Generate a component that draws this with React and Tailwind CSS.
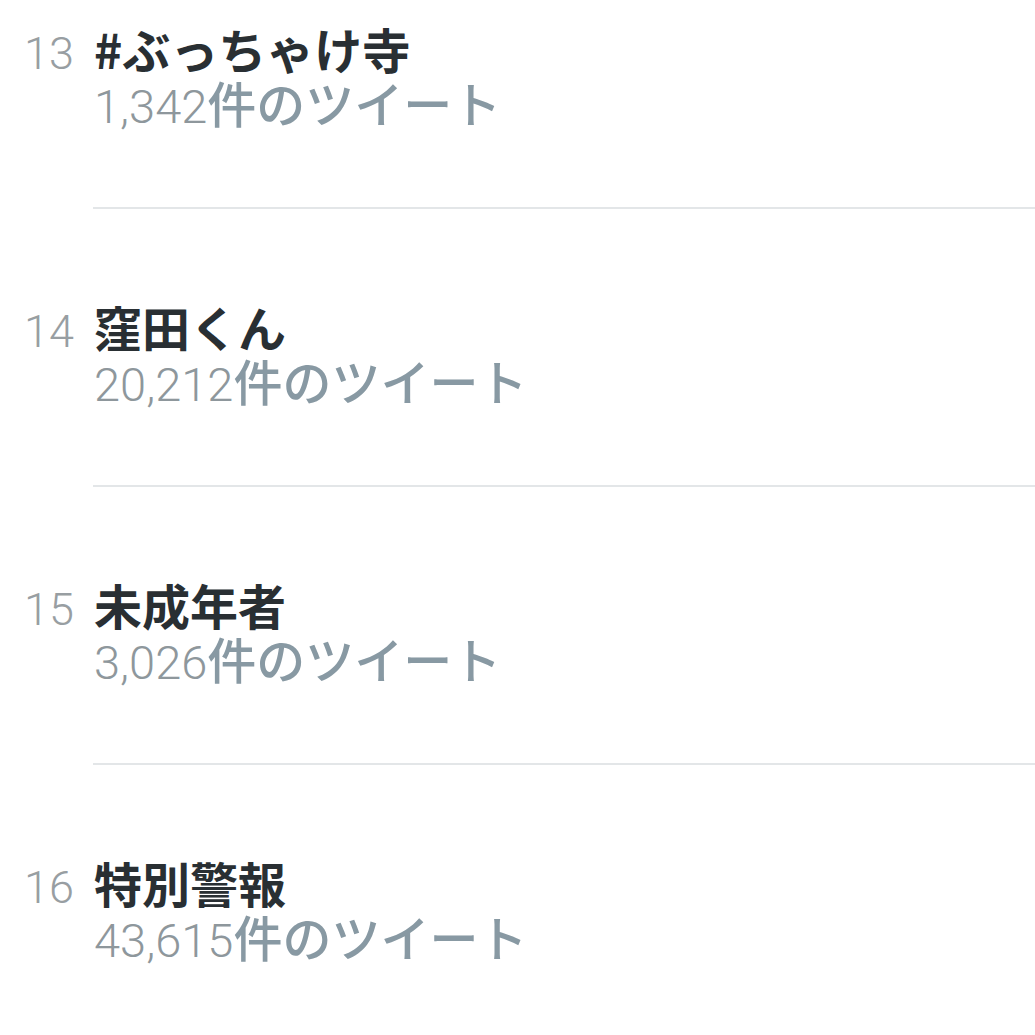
const trends = [
  { rank: 13, name: "#ぶっちゃけ寺", count: "1,342" },
  { rank: 14, name: "窪田くん", count: "20,212" },
  { rank: 15, name: "未成年者", count: "3,026" },
  { rank: 16, name: "特別警報", count: "43,615" },
];

const jp = { fontFamily: '"Noto Sans CJK JP", sans-serif' };
const num = { fontFamily: 'Roboto, "Noto Sans CJK JP", sans-serif' };

export default function App() {
  return (
    <div className="w-[1035px] h-[1035px] bg-white overflow-hidden">
      {trends.map((t, i) => (
        <div key={t.rank}>
          {/* ROW */}
          <div className={`flex pl-[24px] ${i === 0 ? "pt-[22px]" : "pt-[91px]"} pb-[79px]`}>
            <div
              className="w-[70px] h-[53px] mt-[5px] text-[45px] leading-[53px] font-light text-[#989ea2]"
              style={num}
            >
              {t.rank}
            </div>
            <div className="flex flex-col">
              <div
                className="h-[53px] text-[48px] leading-[53px] font-bold text-[#292f33] whitespace-nowrap"
                style={jp}
              >
                {t.name}
              </div>
              <div className="h-[53px] flex items-baseline whitespace-nowrap">
                <span className="text-[47px] leading-[53px] font-light text-[#8e979c]" style={num}>
                  {t.count}
                </span>
                <span className="text-[49px] leading-[53px] font-medium text-[#8899a3]" style={jp}>
                  件のツイート
                </span>
              </div>
            </div>
          </div>
          {/* DIVIDER */}
          <div className="ml-[93px] h-[2px] bg-[#e3e6e8]" />
        </div>
      ))}
    </div>
  );
}
